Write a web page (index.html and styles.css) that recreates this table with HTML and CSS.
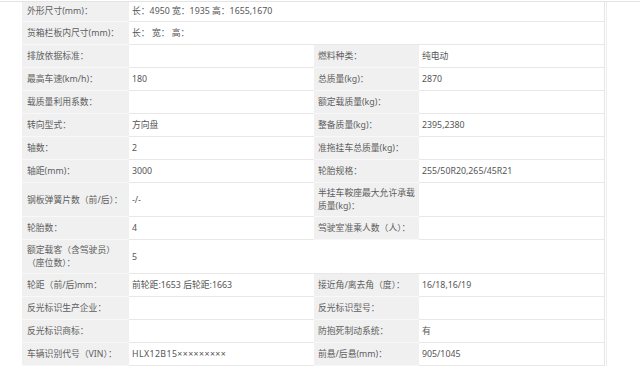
FILE: index.html
```html
<!DOCTYPE html>
<html lang="zh-CN">
<head>
<meta charset="utf-8">
<title>参数</title>
<link rel="stylesheet" href="styles.css">
</head>
<body>
<div class="topline"></div>
<div class="sheet">
  <div class="specs">
    <div class="row first">
      <div class="lab">外形尺寸(mm)：</div>
      <div class="val span3">长：4950 宽：1935 高：1655,1670</div>
    </div>
    <div class="row">
      <div class="lab">货箱栏板内尺寸(mm)：</div>
      <div class="val span3">长： 宽： 高：</div>
    </div>
    <div class="row">
      <div class="lab">排放依据标准：</div>
      <div class="val"></div>
      <div class="lab lab2">燃料种类：</div>
      <div class="val val2">纯电动</div>
    </div>
    <div class="row">
      <div class="lab">最高车速(km/h)：</div>
      <div class="val">180</div>
      <div class="lab lab2">总质量(kg)：</div>
      <div class="val val2">2870</div>
    </div>
    <div class="row">
      <div class="lab">载质量利用系数：</div>
      <div class="val"></div>
      <div class="lab lab2">额定载质量(kg)：</div>
      <div class="val val2"></div>
    </div>
    <div class="row">
      <div class="lab">转向型式：</div>
      <div class="val">方向盘</div>
      <div class="lab lab2">整备质量(kg)：</div>
      <div class="val val2">2395,2380</div>
    </div>
    <div class="row">
      <div class="lab">轴数：</div>
      <div class="val">2</div>
      <div class="lab lab2">准拖挂车总质量(kg)：</div>
      <div class="val val2"></div>
    </div>
    <div class="row">
      <div class="lab">轴距(mm)：</div>
      <div class="val">3000</div>
      <div class="lab lab2">轮胎规格：</div>
      <div class="val val2">255/50R20,265/45R21</div>
    </div>
    <div class="row">
      <div class="lab">钢板弹簧片数（前/后）：</div>
      <div class="val">-/-</div>
      <div class="lab lab2 wrap">半挂车鞍座最大允许承载<br>质量(kg)：</div>
      <div class="val val2"></div>
    </div>
    <div class="row">
      <div class="lab">轮胎数：</div>
      <div class="val">4</div>
      <div class="lab lab2">驾驶室准乘人数（人）：</div>
      <div class="val val2"></div>
    </div>
    <div class="row">
      <div class="lab wrap">额定载客（含驾驶员）<br>（座位数）：</div>
      <div class="val span3">5</div>
    </div>
    <div class="row">
      <div class="lab">轮距（前/后)mm：</div>
      <div class="val">前轮距:1653 后轮距:1663</div>
      <div class="lab lab2">接近角/离去角（度）：</div>
      <div class="val val2">16/18,16/19</div>
    </div>
    <div class="row">
      <div class="lab">反光标识生产企业：</div>
      <div class="val"></div>
      <div class="lab lab2">反光标识型号：</div>
      <div class="val val2"></div>
    </div>
    <div class="row">
      <div class="lab">反光标识商标：</div>
      <div class="val"></div>
      <div class="lab lab2">防抱死制动系统：</div>
      <div class="val val2">有</div>
    </div>
    <div class="row">
      <div class="lab">车辆识别代号（VIN）：</div>
      <div class="val vin">HLX12B15×××××××××</div>
      <div class="lab lab2">前悬/后悬(mm)：</div>
      <div class="val val2">905/1045</div>
    </div>
  </div>
</div>
</body>
</html>
```

FILE: styles.css
```css
html, body {
  margin: 0;
  padding: 0;
  background: #ffffff;
}

body {
  font-family: "Noto Sans", "Noto Sans CJK SC", sans-serif;
  font-size: 8.8px;
  line-height: 13px;
  color: #555555;
}

.topline {
  height: 1px;
  margin-top: 1px;
  background: #e4e4e4;
}

.sheet {
  margin-left: 22px;
  width: 584px;
  border-right: 1px solid #ededed;
}

.specs {
  width: 582px;
  border-right: 1px solid #e6e6e6;
}

.row {
  display: grid;
  grid-template-columns: 107px 185px 105px 185px;
}

.lab,
.val {
  display: flex;
  align-items: center;
  min-height: 15px;
  padding: 4px 0 3px;
}

.lab {
  background: #f0f0f0;
  color: #5e5e5e;
  padding-left: 5px;
  white-space: nowrap;
  border-bottom: 1px solid #f8f8f8;
}

.lab.wrap {
  white-space: normal;
}

.lab2 {
  padding-left: 4px;
}

.val {
  background: #ffffff;
  padding-left: 3px;
  border-bottom: 1px solid #e8e8e8;
  white-space: nowrap;
}

.val2 {
  padding-left: 3px;
}

.span3 {
  grid-column: 2 / span 3;
}

.row.first .lab,
.row.first .val {
  min-height: 12px;
  padding-top: 3px;
  padding-bottom: 3px;
}

.vin {
  letter-spacing: 0.4px;
}
```
